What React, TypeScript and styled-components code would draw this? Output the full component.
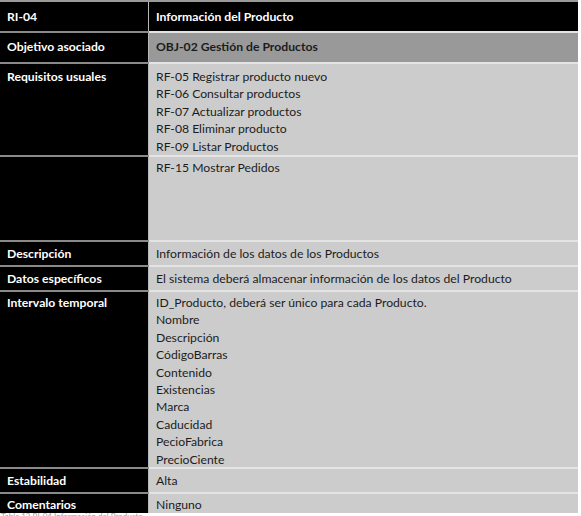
import React from "react";
import styled, { createGlobalStyle } from "styled-components";

const Global = createGlobalStyle`
  html, body { margin: 0; padding: 0; background: #ffffff; }
  body { font-family: Lato, "Open Sans", "Liberation Sans", sans-serif; overflow: hidden; }
`;

const Page = styled.div`
  width: 581px;
  height: 516px;
  padding-top: 2px;
  box-sizing: border-box;
  overflow: hidden;
  background: #fff;
  position: relative;
`;

const TopLine = styled.div`
  position: absolute;
  left: 0;
  top: 0;
  width: 578px;
  height: 2px;
  background: #9a9a9a;
`;

const Table = styled.div`
  width: 578px;
  display: flex;
  flex-direction: column;
`;

const Row = styled.div<{ $h: number; $last?: boolean }>`
  display: grid;
  grid-template-columns: 148px 1px 1fr;
  height: ${(p) => p.$h}px;
  border-bottom: ${(p) => (p.$last ? "none" : "2px solid transparent")};
  position: relative;
  &::after {
    content: "";
    display: ${(p) => (p.$last ? "none" : "block")};
    position: absolute;
    left: 0;
    right: 0;
    bottom: -2px;
    height: 2px;
    background: linear-gradient(to right, #8a8a8a 0, #8a8a8a 149px, #e4e4e4 149px);
  }
`;

const Label = styled.div<{ $pt: number }>`
  background: #000;
  color: #fff;
  font-weight: 700;
  font-size: 12.2px;
  line-height: 17.4px;
  padding: ${(p) => p.$pt}px 0 0 7px;
`;

const Divider = styled.div`
  background: #b8b8b8;
`;

const Value = styled.div<{ $tone: "black" | "dark" | "light"; $pt: number; $bold?: boolean }>`
  background: ${(p) => (p.$tone === "black" ? "#000" : p.$tone === "dark" ? "#999999" : "#cccccc")};
  color: ${(p) => (p.$tone === "black" ? "#fff" : "#1c1c1c")};
  font-weight: ${(p) => (p.$bold ? 700 : 400)};
  font-size: 12.2px;
  line-height: 17.4px;
  padding: ${(p) => p.$pt}px 0 0 7px;
  white-space: nowrap;
`;

const Line = styled.div``;

const Caption = styled.div`
  font-size: 8px;
  line-height: 8px;
  color: #a0a0a0;
  padding: 1px 0 0 1px;
  font-family: Lato, "Liberation Sans", sans-serif;
`;

type RowDef = {
  label: string;
  lines: string[];
  h: number;
  pt: number;
  tone: "black" | "dark" | "light";
  bold?: boolean;
};

const rows: RowDef[] = [
  { label: "RI-04", lines: ["Información del Producto"], h: 29, pt: 6, tone: "black", bold: true },
  { label: "Objetivo asociado", lines: ["OBJ-02 Gestión de Productos"], h: 29, pt: 5, tone: "dark", bold: true },
  {
    label: "Requisitos usuales",
    lines: [
      "RF-05 Registrar producto nuevo",
      "RF-06 Consultar productos",
      "RF-07 Actualizar productos",
      "RF-08 Eliminar producto",
      "RF-09 Listar Productos",
    ],
    h: 91,
    pt: 4,
    tone: "light",
  },
  { label: "", lines: ["RF-15 Mostrar Pedidos"], h: 83, pt: 2, tone: "light" },
  { label: "Descripción", lines: ["Información de los datos de los Productos"], h: 23, pt: 3, tone: "light" },
  {
    label: "Datos específicos",
    lines: ["El sistema deberá almacenar información de los datos del Producto"],
    h: 23,
    pt: 3,
    tone: "light",
  },
  {
    label: "Intervalo temporal",
    lines: [
      "ID_Producto, deberá ser único para cada Producto.",
      "Nombre",
      "Descripción",
      "CódigoBarras",
      "Contenido",
      "Existencias",
      "Marca",
      "Caducidad",
      "PecioFabrica",
      "PrecioCiente",
    ],
    h: 175,
    pt: 2,
    tone: "light",
  },
  { label: "Estabilidad", lines: ["Alta"], h: 23, pt: 3, tone: "light" },
  { label: "Comentarios", lines: ["Ninguno"], h: 17, pt: 2, tone: "light" },
];

export default function App() {
  return (
    <>
      <Global />
      <Page>
        <TopLine />
        <Table>
          {rows.map((r, i) => (
            <Row key={i} $h={r.h} $last={i === rows.length - 1}>
              <Label $pt={r.pt}>{r.label}</Label>
              <Divider />
              <Value $tone={r.tone} $pt={r.pt} $bold={r.bold}>
                {r.lines.map((l, j) => (
                  <Line key={j}>{l}</Line>
                ))}
              </Value>
            </Row>
          ))}
        </Table>
        <Caption>Tabla 13 RI-04 Información del Producto</Caption>
      </Page>
    </>
  );
}
